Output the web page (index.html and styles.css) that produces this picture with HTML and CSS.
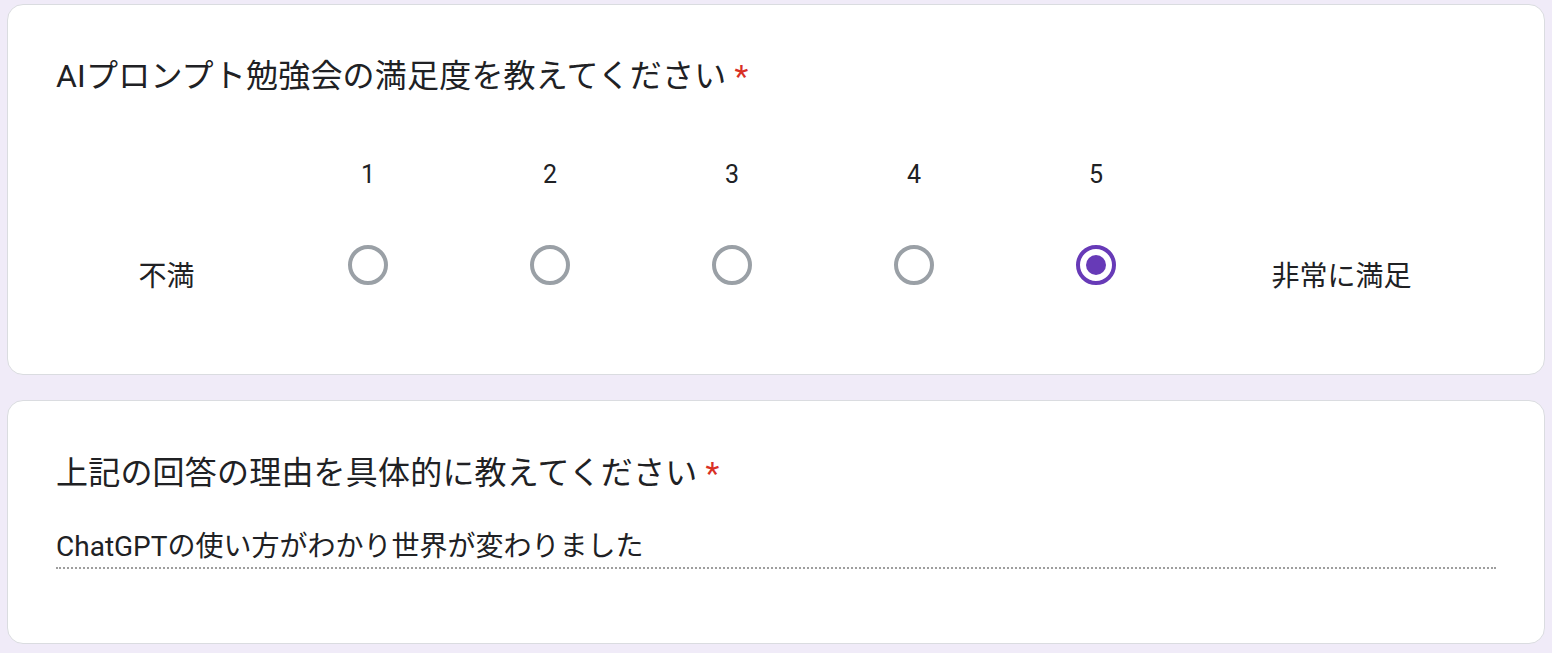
FILE: index.html
```html
<!DOCTYPE html>
<html lang="ja">
<head>
<meta charset="utf-8">
<title>AIプロンプト勉強会アンケート</title>
<link rel="stylesheet" href="styles.css">
</head>
<body>
<form class="form">
  <section class="card card-scale">
    <h2 class="q-title">AIプロンプト勉強会の満足度を教えてください<span class="req">*</span></h2>
    <div class="scale">
      <div class="spacer"></div>
      <div class="num">1</div>
      <div class="num">2</div>
      <div class="num">3</div>
      <div class="num">4</div>
      <div class="num">5</div>
      <div class="spacer"></div>
      <div class="end-label">不満</div>
      <div class="opt"><span class="radio"></span></div>
      <div class="opt"><span class="radio"></span></div>
      <div class="opt"><span class="radio"></span></div>
      <div class="opt"><span class="radio"></span></div>
      <div class="opt"><span class="radio checked"></span></div>
      <div class="end-label">非常に満足</div>
    </div>
  </section>
  <section class="card card-text">
    <h2 class="q-title">上記の回答の理由を具体的に教えてください<span class="req">*</span></h2>
    <div class="answer">ChatGPTの使い方がわかり世界が変わりました</div>
  </section>
</form>
</body>
</html>
```

FILE: styles.css
```css
html, body {
  margin: 0;
  padding: 0;
}
body {
  background: #f0ebf8;
  padding: 4px 7px 10px;
  font-family: Roboto, "Noto Sans CJK JP", sans-serif;
  color: #202124;
}
.form {
  display: flex;
  flex-direction: column;
  gap: 25px;
}
.card {
  background: #fff;
  border: 1px solid #dadce0;
  border-radius: 16px;
  padding: 47px 48px 0;
}
.card-scale {
  padding-bottom: 69px;
}
.card-text {
  padding-top: 48px;
  padding-bottom: 74px;
}
.q-title {
  margin: 0;
  font-weight: 400;
  font-size: 32px;
  line-height: 48px;
  letter-spacing: 0.2px;
  color: #202124;
}
.req {
  color: #d93025;
  padding-left: 8px;
}
.scale {
  margin-top: 51px;
  display: grid;
  grid-template-columns: 221px repeat(5, 182px) 1fr;
  grid-template-rows: 48px 80px;
  row-gap: 26px;
}
.num {
  text-align: center;
  font-size: 25px;
  line-height: 48px;
  color: #202124;
}
.end-label {
  align-self: center;
  text-align: center;
  font-size: 28px;
  line-height: 40px;
  padding-top: 24px;
  color: #202124;
}
.opt {
  display: flex;
  align-items: center;
  justify-content: center;
}
.radio {
  box-sizing: border-box;
  width: 40px;
  height: 40px;
  border-radius: 50%;
  border: 4px solid #9aa0a6;
  display: flex;
  align-items: center;
  justify-content: center;
}
.radio.checked {
  border-color: #673ab7;
}
.radio.checked::after {
  content: "";
  width: 20px;
  height: 20px;
  border-radius: 50%;
  background: #673ab7;
}
.answer {
  margin-top: 30px;
  font-size: 28px;
  line-height: 40px;
  color: #202124;
  border-bottom: 2px dotted #9e9e9e;
}
```
